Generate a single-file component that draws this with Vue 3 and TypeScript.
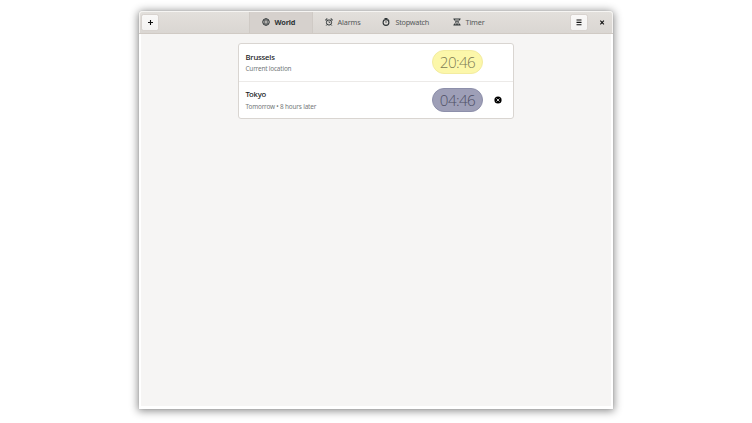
<script setup lang="ts">
interface Tab {
  id: string
  label: string
}

interface City {
  name: string
  detail: string
  time: string
  phase: 'day' | 'night'
  removable: boolean
}

const activeTab = 'world'

const tabs: Tab[] = [
  { id: 'world', label: 'World' },
  { id: 'alarms', label: 'Alarms' },
  { id: 'stopwatch', label: 'Stopwatch' },
  { id: 'timer', label: 'Timer' },
]

const cities: City[] = [
  { name: 'Brussels', detail: 'Current location', time: '20:46', phase: 'day', removable: false },
  { name: 'Tokyo', detail: 'Tomorrow • 8 hours later', time: '04:46', phase: 'night', removable: true },
]
</script>

<template>
  <main class="desktop">
    <section class="window">
      <header class="headerbar">
        <button class="tool add" aria-label="Add">
          <svg viewBox="0 0 8 8"><path d="M4.5 2v5M2 4.5h5" /></svg>
        </button>
        <nav class="tabs">
          <button v-for="tab in tabs" :key="tab.id" class="tab" :class="[tab.id, { active: tab.id === activeTab }]">
            <svg v-if="tab.id === 'world'" class="icon" viewBox="0 0 16 16">
              <circle cx="8" cy="8" r="6.6" />
              <ellipse cx="8" cy="8" rx="2.8" ry="6.5" stroke-width="1.2" />
              <path d="M2 5.5h12M2 10.5h12" stroke-width="1" />
            </svg>
            <svg v-else-if="tab.id === 'alarms'" class="icon" viewBox="0 0 16 16">
              <circle cx="8" cy="9" r="5.2" />
              <path d="M8 6.2V9h2.5" stroke-width="1.4" />
              <path d="M2 5.5V2h3M11 2h3v3.5M4 13l-1.5 2M12 13l1.5 2" />
            </svg>
            <svg v-else-if="tab.id === 'stopwatch'" class="icon" viewBox="0 0 16 16">
              <circle cx="8" cy="9" r="5.8" stroke-width="2.2" />
              <path d="M5 1h6M8 9.5V6.5M12.5 3l1.5 1.5" />
            </svg>
            <svg v-else class="icon" viewBox="0 0 16 16">
              <path d="M0.8 2h14.4M0.8 14h14.4" />
              <path d="M3.2 2v2.5L6.8 8l-3.6 3.5V14M12.8 2v2.5L9.2 8l3.6 3.5V14" />
              <path class="solid" d="M5 5h6L8 8zM4.5 13.5L8 10l3.5 3.5z" />
            </svg>
            <span class="label">{{ tab.label }}</span>
          </button>
        </nav>
        <button class="tool menu" aria-label="Menu">
          <svg viewBox="0 0 8 8"><path d="M1.5 2h5M1.5 4.4h5M1.5 6.7h5" /></svg>
        </button>
        <button class="close" aria-label="Close">
          <svg viewBox="0 0 8 8"><path d="M2.3 2.7l3.6 3.6M5.9 2.7L2.3 6.3" /></svg>
        </button>
      </header>
      <div class="content">
        <ul class="cities">
          <li v-for="city in cities" :key="city.name" class="city">
            <div class="place">
              <div class="name">{{ city.name }}</div>
              <div class="detail">{{ city.detail }}</div>
            </div>
            <div class="clock" :class="city.phase"><span>{{ city.time }}</span></div>
            <div class="action">
              <svg v-if="city.removable" viewBox="0 0 8 8">
                <circle cx="4" cy="4" r="3.6" />
                <path d="M2.5 2.5l3 3M5.5 2.5l-3 3" />
              </svg>
            </div>
          </li>
        </ul>
      </div>
    </section>
  </main>
</template>

<style>
body {
  background: #fff;
}
</style>

<style scoped>
* {
  box-sizing: border-box;
}
.desktop {
  width: 752px;
  height: 423px;
  padding: 11px 0 0 139px;
  overflow: hidden;
  background: #fff;
  font-family: 'Noto Sans', 'Open Sans', sans-serif;
  color: #2e3436;
}
.window {
  display: flex;
  flex-direction: column;
  width: 474px;
  height: 398px;
  border-radius: 4px 4px 0 0;
  background: #fff;
  box-shadow: 0 0 1px rgba(0, 0, 0, 0.3), 0 1px 8px 1px rgba(0, 0, 0, 0.46);
}
.headerbar {
  display: flex;
  align-items: center;
  flex: none;
  height: 23px;
  padding: 0 2px;
  border-radius: 4px 4px 0 0;
  border-bottom: 1px solid #d0cac4;
  box-shadow: inset 0 1px #f6f5f3, inset 1px 0 #f4f2f0, inset -1px 0 #f4f2f0;
  background: linear-gradient(#e3e0dc, #dad6d2);
}
button {
  margin: 0;
  padding: 0;
  border: 0;
  background: none;
  font: inherit;
  color: inherit;
}
svg {
  display: block;
  flex: none;
  fill: none;
  stroke: #2e3436;
}
.tool {
  display: flex;
  align-items: center;
  justify-content: center;
  width: 18px;
  height: 17px;
  border: 1px solid #d8d3cf;
  border-radius: 2.5px;
  background: linear-gradient(#f9f8f7, #f4f3f2);
}
.tool svg,
.close svg {
  width: 8px;
  height: 8px;
  stroke: #111;
  stroke-width: 1.1;
}
.tabs {
  display: flex;
  align-self: stretch;
  margin-left: 90px;
}
.tab {
  display: flex;
  align-items: center;
  gap: 4.5px;
  width: 57px;
  padding-left: 12px;
  font-size: 7.3px;
  letter-spacing: -0.16px;
  line-height: 10px;
  color: #55595a;
}
.tab.active {
  width: 64px;
  margin-top: 1px;
  padding: 0 0 1px 12px;
  border: solid #cfcac5;
  border-width: 0 1px;
  background: #d6d1cd;
  font-weight: 700;
  color: #2e3436;
}
.tab.stopwatch {
  width: 71px;
  gap: 5.5px;
  letter-spacing: -0.26px;
}
.tab .icon {
  width: 8px;
  height: 8px;
  stroke-width: 2;
}
.solid {
  fill: #2e3436;
  stroke: none;
}
.menu {
  margin-left: auto;
}
.close {
  margin: 0 5px 0 10px;
}
.close svg {
  stroke-width: 1.1;
}
.content {
  flex: 1;
  margin: 0 2px 3px;
  padding: 9px 0 0 97px;
  background: #f6f5f4;
}
.cities {
  width: 276px;
  height: 76px;
  margin: 0;
  padding: 0;
  border: 1px solid #d9d5d1;
  border-radius: 3px;
  list-style: none;
  background: #fff;
}
.city {
  display: flex;
  align-items: center;
  height: 37px;
  padding-left: 6.5px;
}
.city + .city {
  border-top: 1px solid #eceae8;
}
.place {
  width: 186.5px;
}
.name {
  font-size: 7.7px;
  font-weight: 500;
  letter-spacing: -0.2px;
  line-height: 11px;
  color: #181a1b;
}
.city:first-child .name {
  padding-top: 1px;
}
.detail {
  margin-top: 1px;
  font-size: 6.4px;
  letter-spacing: -0.17px;
  line-height: 11px;
  color: #747879;
}
.city:first-child .detail {
  margin-top: 0;
}
.clock {
  display: flex;
  align-items: center;
  justify-content: center;
  width: 51px;
  height: 24px;
  border: 1px solid;
  border-radius: 12px;
  font-family: 'Open Sans', 'Noto Sans', sans-serif;
  font-size: 15.2px;
  font-weight: 300;
  letter-spacing: -0.6px;
  line-height: 20px;
}
.clock span {
  padding-bottom: 1px;
}
.city:first-child .clock {
  margin-bottom: 1px;
}
.day {
  border-color: #f3eca0;
  background: #fcf7aa;
  color: #7d7b55;
}
.night {
  border-color: #8d8faa;
  background: #9e9fb7;
  color: #4e4f65;
}
.action {
  display: flex;
  justify-content: center;
  width: 29px;
}
.action svg {
  width: 8px;
  height: 8px;
}
.action circle {
  fill: #000;
  stroke: none;
}
.action path {
  stroke: #fff;
  stroke-width: 0.8;
}
</style>
